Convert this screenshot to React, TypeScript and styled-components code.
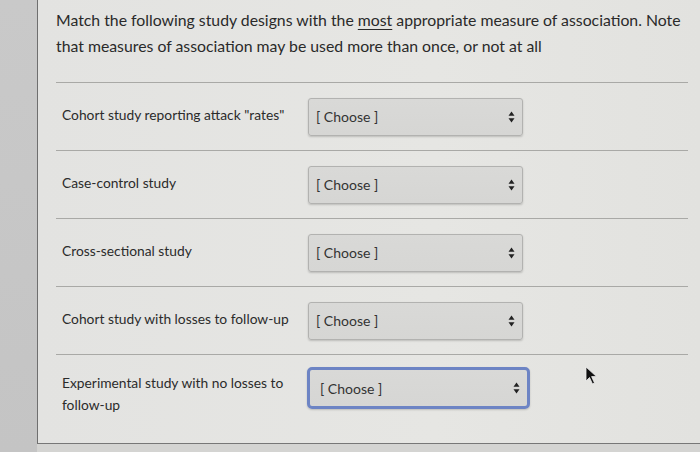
import React from "react";
import styled, { createGlobalStyle } from "styled-components";

const Global = createGlobalStyle`
  html, body { margin: 0; padding: 0; background: #d2d2d0; }
  body { font-family: Lato, "Open Sans", "Liberation Sans", sans-serif; }
`;

const Screen = styled.div`
  display: flex;
  width: 700px;
  height: 452px;
  overflow: hidden;
  background: #d4d4d2;
`;

const SideStrip = styled.div`
  width: 37px;
  flex: none;
  background: linear-gradient(180deg, #c9c9c9 0%, #c4c4c4 100%);
`;

const Panel = styled.div`
  flex: 1;
  height: 444px;
  box-sizing: border-box;
  border-left: 1px solid #6f6f6f;
  border-bottom: 1px solid #777;
  background: linear-gradient(90deg, #e3e3e1 0%, #e6e6e3 60%, #e2e2df 100%);
  padding: 7px 12px 0 18px;
  display: flex;
  flex-direction: column;
`;

const Question = styled.p`
  margin: 0 0 23px;
  font-size: 15.8px;
  line-height: 26px;
  color: #2a2a2a;
`;

const Underlined = styled.span`
  text-decoration: underline;
  text-underline-offset: 3px;
`;

const Row = styled.div<{ $tall?: boolean }>`
  display: grid;
  grid-template-columns: 252px 1fr;
  align-items: center;
  height: ${(p) => (p.$tall ? "89px" : "68px")};
  box-sizing: border-box;
  border-top: 1px solid #a9a9a6;
  padding-bottom: ${(p) => (p.$tall ? "22px" : "0")};
`;

const Label = styled.div<{ $tall?: boolean }>`
  padding-left: 6px;
  font-size: 13.8px;
  line-height: 22px;
  color: #2b2b2b;
  margin-top: ${(p) => (p.$tall ? "12px" : "-4px")};
`;

const Select = styled.div<{ $focused?: boolean }>`
  width: ${(p) => (p.$focused ? "223px" : "215px")};
  height: ${(p) => (p.$focused ? "42px" : "38px")};
  margin-left: ${(p) => (p.$focused ? "-1px" : "0")};
  box-sizing: border-box;
  display: flex;
  align-items: center;
  justify-content: space-between;
  padding: 0 7px 0 ${(p) => (p.$focused ? "10px" : "7px")};
  border-radius: ${(p) => (p.$focused ? "5px" : "3px")};
  border: ${(p) => (p.$focused ? "3px solid #6d84c4" : "1px solid #b2b2b0")};
  background: linear-gradient(180deg, #d9d9d7 0%, #d6d6d4 100%);
  box-shadow: 0 1px 2px rgba(0, 0, 0, 0.18);
  font-size: 14px;
  color: #333;
`;

const Arrows = styled.svg`
  flex: none;
`;

const Cursor = styled.svg`
  position: absolute;
  left: 585px;
  top: 366px;
`;

const items = [
  "Cohort study reporting attack \"rates\"",
  "Case-control study",
  "Cross-sectional study",
  "Cohort study with losses to follow-up",
  "Experimental study with no losses to follow-up",
];

export default function App() {
  return (
    <>
      <Global />
      <Screen>
        <SideStrip />
        <Panel>
          <Question>
            Match the following study designs with the <Underlined>most</Underlined> appropriate
            measure of association. Note that measures of association may be used more than once,
            or not at all
          </Question>
          {items.map((t, i) => {
            const last = i === items.length - 1;
            return (
              <Row key={t} $tall={last}>
                <Label $tall={last}>{t}</Label>
                <Select $focused={last}>
                  <span>[ Choose ]</span>
                  <Arrows width="7" height="12" viewBox="0 0 7 12">
                    <path d="M3.5 0.5 L6.5 4.8 L0.5 4.8 Z" fill="#222" />
                    <path d="M3.5 11.5 L6.5 7.2 L0.5 7.2 Z" fill="#222" />
                  </Arrows>
                </Select>
              </Row>
            );
          })}
        </Panel>
      </Screen>
      <Cursor width="14" height="20" viewBox="0 0 14 20">
        <path d="M1 1 L1 15 L4.5 11.5 L7.5 18 L9.5 17 L6.6 10.6 L11.5 10.6 Z" fill="#111" stroke="#eee" strokeWidth="0.8" />
      </Cursor>
    </>
  );
}
